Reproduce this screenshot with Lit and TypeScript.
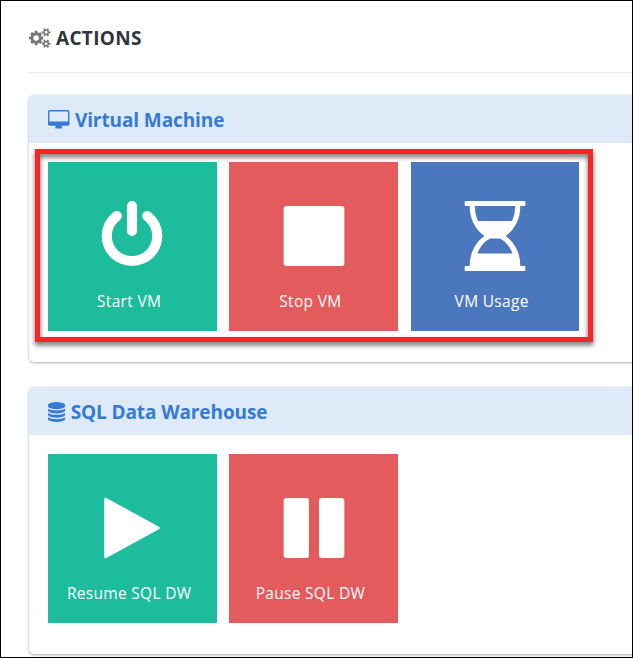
import { LitElement, html, css, svg } from "lit";
import { customElement, property } from "lit/decorators.js";

interface Glyph {
  width: number;
  path: string;
}

// Glyphs share a 1792-unit em height; only their advance width differs.
const GLYPHS: Record<string, Glyph> = {
  cogs: {
    width: 1920,
    path: "M896 896q0-106-75-181t-181-75-181 75-75 181 75 181 181 75 181-75 75-181zm768 512q0-52-38-90t-90-38-90 38-38 90q0 53 37.5 90.5t90.5 37.5 90.5-37.5 37.5-90.5zm0-1024q0-52-38-90t-90-38-90 38-38 90q0 53 37.5 90.5t90.5 37.5 90.5-37.5 37.5-90.5zm-384 421v185q0 10-7 19.5t-16 10.5l-155 24q-11 35-32 76 34 48 90 115 7 11 7 20 0 12-7 19-23 30-82.5 89.5t-78.5 59.5q-11 0-21-7l-115-90q-37 19-77 31-11 108-23 155-7 24-30 24h-186q-11 0-20-7.5t-10-17.5l-23-153q-34-10-75-31l-118 89q-7 7-20 7-11 0-21-8-144-133-144-160 0-9 7-19 10-14 41-53t47-61q-23-44-35-82l-152-24q-10-1-17-9.5t-7-19.5v-185q0-10 7-19.5t16-10.5l155-24q11-35 32-76-34-48-90-115-7-11-7-20 0-12 7-20 22-30 82-89t79-59q11 0 21 7l115 90q34-18 77-32 11-108 23-154 7-24 30-24h186q11 0 20 7.5t10 17.5l23 153q34 10 75 31l118-89q8-7 20-7 11 0 21 8 144 133 144 160 0 8-7 19-12 16-42 54t-45 60q23 48 34 82l152 23q10 2 17 10.5t7 19.5zm640 533v140q0 16-149 31-12 27-30 52 51 113 51 138 0 4-4 7-122 71-124 71-8 0-46-47t-52-68q-20 2-30 2t-30-2q-14 21-52 68t-46 47q-2 0-124-71-4-3-4-7 0-25 51-138-18-25-30-52-149-15-149-31v-140q0-16 149-31 13-29 30-52-51-113-51-138 0-4 4-7 4-2 35-20t59-34 30-16q8 0 46 46.5t52 67.5q20-2 30-2t30 2q51-71 92-112l6-2q4 0 124 70 4 3 4 7 0 25-51 138 17 23 30 52 149 15 149 31zm0-1024v140q0 16-149 31-12 27-30 52 51 113 51 138 0 4-4 7-122 71-124 71-8 0-46-47t-52-68q-20 2-30 2t-30-2q-14 21-52 68t-46 47q-2 0-124-71-4-3-4-7 0-25 51-138-18-25-30-52-149-15-149-31v-140q0-16 149-31 13-29 30-52-51-113-51-138 0-4 4-7 4-2 35-20t59-34 30-16q8 0 46 46.5t52 67.5q20-2 30-2t30 2q51-71 92-112l6-2q4 0 124 70 4 3 4 7 0 25-51 138 17 23 30 52 149 15 149 31z",
  },
  desktop: {
    width: 1920,
    path: "M1792 992v-832q0-13-9.5-22.5t-22.5-9.5h-1600q-13 0-22.5 9.5t-9.5 22.5v832q0 13 9.5 22.5t22.5 9.5h1600q13 0 22.5-9.5t9.5-22.5zm128-832v1088q0 66-47 113t-113 47h-544q0 37 16 77.5t32 71 16 43.5q0 26-19 45t-45 19h-512q-26 0-45-19t-19-45q0-14 16-44t32-70 16-78h-544q-66 0-113-47t-47-113v-1088q0-66 47-113t113-47h1600q66 0 113 47t47 113z",
  },
  database: {
    width: 1536,
    path: "M768 768q237 0 443-43t325-127v170q0 69-103 128t-280 93.5-385 34.5-385-34.5-280-93.5-103-128v-170q119 84 325 127t443 43zm0 768q237 0 443-43t325-127v170q0 69-103 128t-280 93.5-385 34.5-385-34.5-280-93.5-103-128v-170q119 84 325 127t443 43zm0-384q237 0 443-43t325-127v170q0 69-103 128t-280 93.5-385 34.5-385-34.5-280-93.5-103-128v-170q119 84 325 127t443 43zm0-1152q208 0 385 34.5t280 93.5 103 128v128q0 69-103 128t-280 93.5-385 34.5-385-34.5-280-93.5-103-128v-128q0-69 103-128t280-93.5 385-34.5z",
  },
  power: {
    width: 1792,
    path: "M1664 896q0 156-61 298t-164 245-245 164-298 61-298-61-245-164-164-245-61-298q0-182 80.5-343t226.5-270q43-32 95.5-25t83.5 50q32 42 24.5 94.5t-49.5 84.5q-98 74-151.5 181t-53.5 228q0 104 40.5 198.5t109.5 163.5 163.5 109.5 198.5 40.5 198.5-40.5 163.5-109.5 109.5-163.5 40.5-198.5q0-121-53.5-228t-151.5-181q-42-32-49.5-84.5t24.5-94.5q31-43 84-50t95 25q146 109 226.5 270t80.5 343zm-640-768v640q0 52-38 90t-90 38-90-38-38-90v-640q0-52 38-90t90-38 90 38 38 90z",
  },
  stop: {
    width: 1792,
    path: "M1664 192v1408q0 26-19 45t-45 19h-1408q-26 0-45-19t-19-45v-1408q0-26 19-45t45-19h1408q26 0 45 19t19 45z",
  },
  hourglass: {
    width: 1536,
    path: "M1408 128q0 261-106.5 461.5t-266.5 306.5q160 106 266.5 306.5t106.5 461.5h96q14 0 23 9t9 23v64q0 14-9 23t-23 9h-1472q-14 0-23-9t-9-23v-64q0-14 9-23t23-9h96q0-261 106.5-461.5t266.5-306.5q-160-106-266.5-306.5t-106.5-461.5h-96q-14 0-23-9t-9-23v-64q0-14 9-23t23-9h1472q14 0 23 9t9 23v64q0 14-9 23t-23 9zM256 128q0 206 80 384h864q80-178 80-384zM322 1344H1214C1144 1160 1020 1010 885 957H651C516 1010 392 1160 322 1344z",
  },
  play: {
    width: 1792,
    path: "M1576 927l-1328 738q-23 13-39.5 3t-16.5-36v-1472q0-26 16.5-36t39.5 3l1328 738q23 13 23 31t-23 31z",
  },
  pause: {
    width: 1792,
    path: "M1664 192v1408q0 26-19 45t-45 19h-512q-26 0-45-19t-19-45v-1408q0-26 19-45t45-19h512q26 0 45 19t19 45zm-896 0v1408q0 26-19 45t-45 19h-512q-26 0-45-19t-19-45v-1408q0-26 19-45t45-19h512q26 0 45 19t19 45z",
  },
};

@customElement("glyph-icon")
export class GlyphIcon extends LitElement {
  @property() name = "";

  static styles = css`
    :host { display: block; flex: none; height: 20px; }
    .glyph { display: block; height: 100%; overflow: visible; fill: currentColor; fill-rule: evenodd; }
  `;

  render() {
    const g = GLYPHS[this.name];
    if (!g) return null;
    return html`<svg class="glyph" viewBox="0 0 ${g.width} 1792" aria-hidden="true">${svg`<path d=${g.path}></path>`}</svg>`;
  }
}

@customElement("action-tile")
export class ActionTile extends LitElement {
  @property() icon = "";
  @property() label = "";
  @property({ reflect: true }) tone = "green";

  static styles = css`
    :host { display: block; flex: none; width: 168.75px; height: 169px; color: #fff; }
    :host([tone="green"]) { background: #1dbc9c; }
    :host([tone="red"]) { background: #e35b5c; }
    :host([tone="blue"]) { background: #4b77be; }
    .tile { display: flex; flex-direction: column; align-items: center; padding-top: 39px; }
    .icon { height: 70px; transform: scaleX(1.012); }
    .label { margin-top: 18px; padding-right: 6.5px; font-size: 15.5px; line-height: 24px; letter-spacing: 0.3px; white-space: nowrap; }
  `;

  render() {
    return html`<div class="tile">
      <glyph-icon class="icon" name=${this.icon}></glyph-icon>
      <span class="label">${this.label}</span>
    </div>`;
  }
}

@customElement("action-card")
export class ActionCard extends LitElement {
  @property() icon = "";
  @property() heading = "";

  static styles = css`
    :host { display: block; height: 267px; width: 640px; border-radius: 5px; background: #fff; box-shadow: 0 1px 3px rgba(0, 0, 0, 0.34); }
    .head { display: flex; gap: 5.5px; height: 33px; padding: 15px 19px 0; border-radius: 5px 5px 0 0; background: #dfeaf8; color: #337ad9; }
    .title { margin: -3px 0 0; font-size: 19px; font-weight: 700; letter-spacing: -0.1px; line-height: 26px; white-space: nowrap; }
    .tiles { display: flex; gap: 12.5px; padding: 19px 19px 0; }
  `;

  render() {
    return html`
      <div class="head">
        <glyph-icon name=${this.icon}></glyph-icon>
        <h2 class="title">${this.heading}</h2>
      </div>
      <div class="tiles"><slot></slot></div>
    `;
  }
}

@customElement("app-root")
export class AppRoot extends LitElement {
  static styles = css`
    :host {
      display: block; box-sizing: border-box; width: 633px; height: 658px; overflow: hidden;
      border: 1px solid #000; background: #fff;
      font-family: "Open Sans", "Noto Sans", sans-serif;
    }
    .page { display: flex; flex-direction: column; padding-left: 28px; }
    .top { display: flex; gap: 5.5px; height: 44px; padding-top: 27px; border-bottom: 1px solid #ececec; }
    .cogs { color: #777; }
    .title { margin: -3px 0 0; color: #2f353b; font-size: 19px; font-weight: 700; letter-spacing: 0.35px; line-height: 26px; }
    .cards { display: flex; flex-direction: column; gap: 25px; padding-top: 22px; }
    .group { position: relative; }
    .callout {
      position: absolute; left: 6px; top: 54px; box-sizing: border-box; width: 558px; height: 193px;
      border: 5px solid #fb2323; filter: drop-shadow(0 3px 2.5px rgba(0, 0, 0, 0.6)); pointer-events: none;
    }
  `;

  render() {
    return html`<main class="page">
      <header class="top">
        <glyph-icon class="cogs" name="cogs"></glyph-icon>
        <h1 class="title">ACTIONS</h1>
      </header>
      <div class="cards">
        <div class="group">
          <action-card icon="desktop" heading="Virtual Machine">
            <action-tile icon="power" label="Start VM" tone="green"></action-tile>
            <action-tile icon="stop" label="Stop VM" tone="red"></action-tile>
            <action-tile icon="hourglass" label="VM Usage" tone="blue"></action-tile>
          </action-card>
          <div class="callout"></div>
        </div>
        <action-card icon="database" heading="SQL Data Warehouse">
          <action-tile icon="play" label="Resume SQL DW" tone="green"></action-tile>
          <action-tile icon="pause" label="Pause SQL DW" tone="red"></action-tile>
        </action-card>
      </div>
    </main>`;
  }
}
